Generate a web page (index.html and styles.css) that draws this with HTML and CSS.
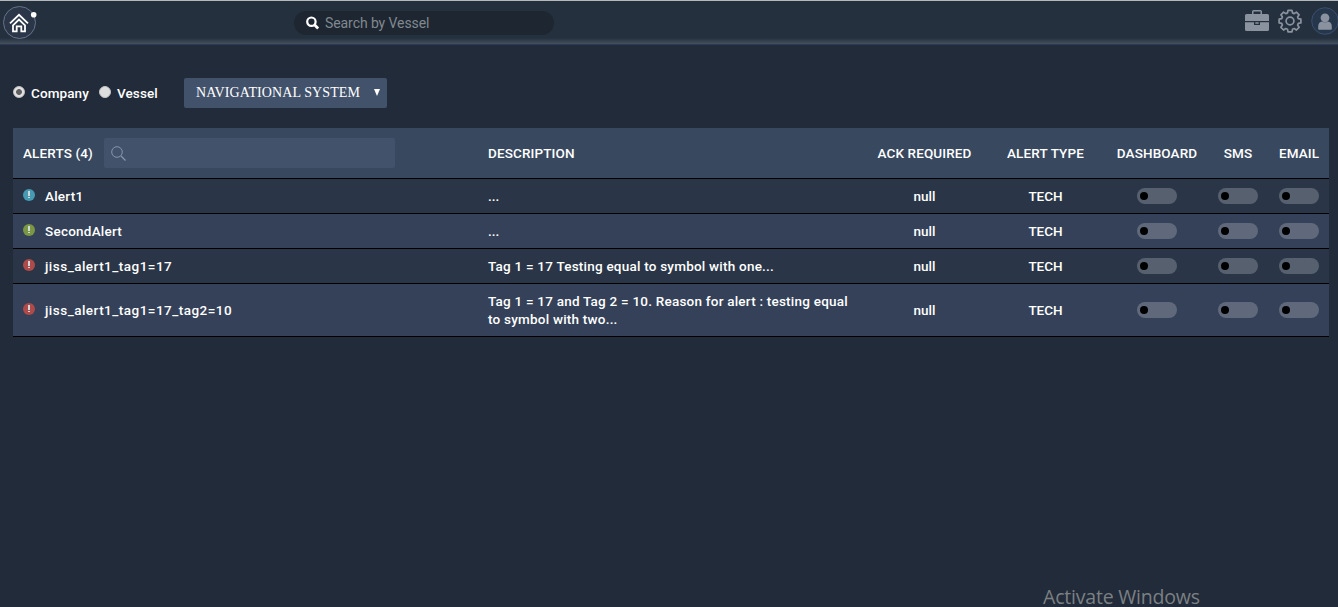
FILE: index.html
```html
<!DOCTYPE html>
<html lang="en">
<head>
<meta charset="utf-8">
<title>Alerts</title>
<link rel="stylesheet" href="styles.css">
</head>
<body>
<header class="topbar">
  <a class="home">
    <svg width="34" height="34" viewBox="0 0 34 34" fill="none" stroke="#fff">
      <circle cx="16.500" cy="17.500" r="16" fill="#2b3748" stroke="#65748b"/>
      <path d="M7 18.300 16 9.800l9 8.500" stroke-width="1.800"/>
      <path d="M10 20.300 16 14.500l6 5.800v6h-3.700v-5h-4.600v5h-3.700z" stroke-width="1.800"/>
      <circle cx="30.700" cy="9.700" r="2.800" fill="#fff" stroke="none"/>
    </svg>
  </a>
  <div class="vessel-search">
    <svg width="14" height="14" viewBox="0 0 14 14" fill="none" stroke="#fff"><circle cx="5.400" cy="5.700" r="4.200" stroke-width="2.200"/><path d="m8.500 8.800 3.600 3.700" stroke-width="2.800"/></svg>
    <span class="vessel-placeholder">Search by Vessel</span>
  </div>
  <div class="tools">
    <svg class="briefcase" width="24" height="22" viewBox="0 0 24 22" fill="#8a929f"><path d="M7 4V1.500Q7 0 8.500 0h7Q17 0 17 1.500V4h5.500Q24 4 24 5.500V11H0V5.500Q0 4 1.500 4zm1.500 0h7V1.500h-7zM0 12.200h9V15h6v-2.800h9v7.300q0 1.500-1.500 1.500h-21Q0 21 0 19.500zM10.300 12.200h3.400v1.500h-3.400z" fill-rule="evenodd"/></svg>
    <svg class="gear" width="24" height="24" viewBox="0 0 24 24" fill="none" stroke="#8a929f" stroke-width="1.700" stroke-linejoin="round"><path d="m10 1.300h4l.5 2.600 1.700.7 2.200-1.500 2.700 2.700-1.500 2.200.7 1.700 2.600.5v3.700l-2.600.5-.7 1.700 1.500 2.200-2.700 2.700-2.200-1.500-1.700.7-.5 2.600h-4l-.5-2.600-1.700-.7-2.200 1.500-2.700-2.700 1.500-2.200-.7-1.700-2.600-.5v-3.700l2.600-.5.700-1.700-1.500-2.200 2.700-2.700 2.200 1.500 1.700-.7z"/><circle cx="12" cy="12" r="3.900"/></svg>
    <svg class="user" width="28" height="28" viewBox="0 0 28 28"><circle cx="14" cy="14" r="13.300" fill="#26364b" stroke="#3b4f70"/><circle cx="14" cy="10.800" r="4.400" fill="#8a929f"/><path d="M7.200 22v-2.500q0-4.300 4-5 2.800 1.700 5.600 0 4 .7 4 5V22q0 .8-.8.8H8q-.8 0-.8-.8z" fill="#8a929f"/></svg>
  </div>
</header>
<main class="content">
  <div class="filters">
    <span class="radio radio-on"></span><span class="radio-label company">Company</span>
    <span class="radio"></span><span class="radio-label vessel">Vessel</span>
    <div class="system-select"><span class="system-name">NAVIGATIONAL SYSTEM</span><svg width="6" height="7" viewBox="0 0 6 7"><path d="M0 0h6L3 7z" fill="#fff"/></svg></div>
  </div>
  <section class="alerts">
    <div class="row head">
      <div class="title"><span class="t-alerts">ALERTS (4)</span><div class="alert-search"><svg width="15" height="15" viewBox="0 0 15 15" fill="none" stroke="#8796ab"><circle cx="6" cy="6" r="5.300"/><path d="m10 10 4.500 4.500" stroke-width="1.300"/></svg></div></div>
      <div>DESCRIPTION</div>
      <div class="mid">ACK REQUIRED</div>
      <div class="mid">ALERT TYPE</div>
      <div class="mid">DASHBOARD</div>
      <div class="mid">SMS</div>
      <div class="mid">EMAIL</div>
    </div>
    <div class="row">
      <div class="name"><i class="dot blue"><b></b></i><span>Alert1</span></div>
      <div>...</div><div class="mid">null</div><div class="mid">TECH</div>
      <div class="mid"><i class="toggle"></i></div><div class="mid"><i class="toggle"></i></div><div class="mid"><i class="toggle"></i></div>
    </div>
    <div class="row alt">
      <div class="name"><i class="dot green"><b></b></i><span>SecondAlert</span></div>
      <div>...</div><div class="mid">null</div><div class="mid">TECH</div>
      <div class="mid"><i class="toggle"></i></div><div class="mid"><i class="toggle"></i></div><div class="mid"><i class="toggle"></i></div>
    </div>
    <div class="row">
      <div class="name"><i class="dot red"><b></b></i><span class="tag-name">jiss_alert1_tag1=17</span></div>
      <div class="description">Tag 1 = 17 Testing equal to symbol with one...</div><div class="mid">null</div><div class="mid">TECH</div>
      <div class="mid"><i class="toggle"></i></div><div class="mid"><i class="toggle"></i></div><div class="mid"><i class="toggle"></i></div>
    </div>
    <div class="row alt tall">
      <div class="name"><i class="dot red"><b></b></i><span class="tag-name">jiss_alert1_tag1=17_tag2=10</span></div>
      <div class="description">Tag 1 = 17 and Tag 2 = 10. Reason for alert : testing equal<br>to symbol with two...</div><div class="mid">null</div><div class="mid">TECH</div>
      <div class="mid"><i class="toggle"></i></div><div class="mid"><i class="toggle"></i></div><div class="mid"><i class="toggle"></i></div>
    </div>
  </section>
</main>
<footer class="activation">Activate Windows</footer>
</body>
</html>
```
FILE: styles.css
```css
* { box-sizing: border-box; }
body {
  margin: 0;
  height: 607px;
  overflow: hidden;
  display: flex;
  flex-direction: column;
  background: #222b39;
  color: #fff;
  font: 500 13.5px/18px Roboto, sans-serif;
}
.topbar {
  height: 45px;
  flex: none;
  display: flex;
  align-items: flex-start;
  border-top: 1px solid #b4b8bb;
  border-bottom: 1px solid #2c3b55;
  background: linear-gradient(#25303e 0, #25303e 37px, #465060 43px);
}
.home { width: 291px; padding: 4px 0 0 3px; }
.vessel-search {
  display: flex;
  align-items: center;
  width: 260px;
  height: 24px;
  margin: 10px 0 0 3px;
  padding-left: 12px;
  gap: 5px;
  border-radius: 12px;
  background: #1d2631;
}
.vessel-placeholder { color: #818990; font-size: 14px; font-weight: 400; letter-spacing: -.08px; }
.tools { display: flex; margin-left: auto; flex: none; }
.briefcase { margin: 9px 9px 0 0; }
.gear { margin: 8px 9px 0 0; }
.user { margin: 6px -1px 0 0; }
.content { flex: 1; padding: 33px 9px 0 13px; }
.filters { display: flex; align-items: center; height: 30px; }
.radio { width: 12px; height: 12px; margin-top: -2px; border-radius: 50%; background: #dedede; border: 1px solid #c6c6c6; }
.radio-on { background: radial-gradient(circle, #606060 0 2.500px, #e2e2e2 3.300px); }
.radio-label { font-size: 13.5px; margin-left: 6px; }
.company { width: 68px; letter-spacing: .1px; }
.vessel { width: 67px; letter-spacing: .1px; }
.system-select {
  display: flex;
  align-items: center;
  justify-content: space-between;
  width: 203px;
  height: 30px;
  padding: 0 7px 1px 12px;
  border-radius: 2px;
  background: #42526b;
  font: 14px/18px "Liberation Serif", serif;
  letter-spacing: .1px;
}
.alerts { width: 1316px; margin-top: 20px; }
.row {
  display: grid;
  grid-template-columns: 465px 387px 119px 123px 100px 62px 60px;
  align-items: center;
  height: 35px;
  border-bottom: 1px solid #000;
  background: #2a3647;
}
.row > div { padding-left: 10px; white-space: nowrap; }
.row > .mid { padding: 0; display: flex; justify-content: center; }
.row > .description { letter-spacing: .22px; }
.name { letter-spacing: .24px; }
.tag-name { letter-spacing: .48px; }
.head { height: 51px; background: #38485f; letter-spacing: .12px; }
.alt { background: #344158; }
.tall { height: 53px; }
.title, .name { display: flex; align-items: center; }
.t-alerts { width: 81px; }
.alert-search { display: flex; align-items: center; width: 291px; height: 30px; padding-left: 7px; border-radius: 2px; background: #42526b; }
.dot { width: 12px; height: 12px; margin: -3px 10px 0 0; border-radius: 50%; display: flex; justify-content: center; padding-top: 2px; }
.dot b { width: 2px; height: 7px; background: linear-gradient(#cfd9dd 0 5px, transparent 5px 6px, #cfd9dd 6px); }
.blue { background: #469bb2; }
.green { background: #7c9743; }
.red { background: #ae4a49; }
.toggle { width: 40px; height: 16px; padding: 4px 3px; border-radius: 8px; background: rgba(255, 255, 255, .21); }
.toggle::before { content: ""; display: block; width: 8px; height: 8px; border-radius: 50%; background: #000; }
.activation { height: 21px; padding-left: 1043px; color: #7b8083; font: 19.5px/21px "Open Sans", sans-serif; letter-spacing: -.2px; }
```
